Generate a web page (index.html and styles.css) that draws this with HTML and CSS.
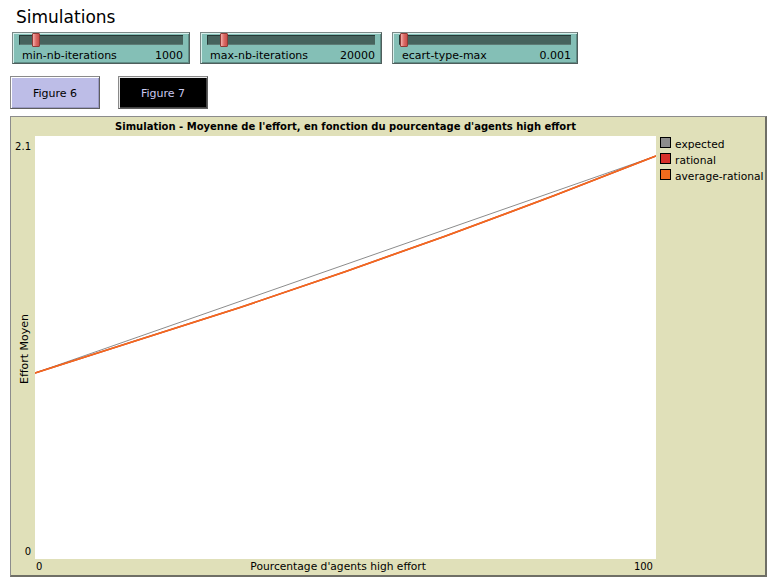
FILE: index.html
```html
<!DOCTYPE html>
<html>
<head>
<meta charset="utf-8">
<title>Simulations</title>
<link rel="stylesheet" href="styles.css">
</head>
<body>
<h1 class="title">Simulations</h1>
<div class="sliders">
  <div class="slider s1">
    <div class="track"><div class="thumb" style="left:12px"></div></div>
    <div class="slider-row"><span>min-nb-iterations</span><span>1000</span></div>
  </div>
  <div class="slider s2">
    <div class="track"><div class="thumb" style="left:12px"></div></div>
    <div class="slider-row"><span>max-nb-iterations</span><span>20000</span></div>
  </div>
  <div class="slider s3">
    <div class="track"><div class="thumb" style="left:0px"></div></div>
    <div class="slider-row"><span>ecart-type-max</span><span>0.001</span></div>
  </div>
</div>
<div class="buttons">
  <div class="btn btn-light">Figure 6</div>
  <div class="btn btn-dark">Figure 7</div>
</div>
<div class="plot">
  <div class="plot-title">Simulation - Moyenne de l'effort, en fonction du pourcentage d'agents high effort</div>
  <div class="yaxis">
    <span class="ytick">2.1</span>
    <span class="ylabel">Effort Moyen</span>
    <span class="ytick">0</span>
  </div>
  <div class="area">
    <svg class="chart" width="621" height="423" viewBox="0 0 621 423">
      <line x1="0" y1="237" x2="621" y2="20" stroke="#8c8c8c" stroke-width="1"/>
      <polyline points="0,237 100,205 205,171.5 310,135.7 410,100.2 520,59.3 621,20" fill="none" stroke="#d73027" stroke-width="1.6"/>
      <polyline points="0,237 100,205 205,171.5 310,135.7 410,100.2 520,59.3 621,20" fill="none" stroke="#f26b1d" stroke-width="1.6"/>
    </svg>
  </div>
  <div class="legend">
    <div class="leg-item"><span class="sw sw-gray"></span>expected</div>
    <div class="leg-item"><span class="sw sw-red"></span>rational</div>
    <div class="leg-item"><span class="sw sw-orange"></span>average-rational</div>
  </div>
  <div class="xaxis">
    <span class="xtick">0</span>
    <span class="xlabel">Pourcentage d'agents high effort</span>
    <span class="xtick">100</span>
  </div>
</div>
</body>
</html>
```
FILE: styles.css
```css
html, body {
  margin: 0;
  padding: 0;
  background: #ffffff;
  font-family: "DejaVu Sans", sans-serif;
  color: #000;
}

.title {
  margin: 0;
  padding: 8px 0 0 16px;
  height: 26px;
  box-sizing: border-box;
  font-size: 17px;
  font-weight: normal;
  line-height: 18px;
}

.sliders {
  display: flex;
  gap: 10px;
  margin: 6px 0 0 12px;
}

.slider {
  box-sizing: border-box;
  height: 32px;
  background: #84bfb6;
  border: 1px solid #7c8a88;
  border-right-color: #4f5e5c;
  border-bottom-color: #4f5e5c;
  box-shadow: inset 1px 1px 0 #d6efeb, inset -1px -1px 0 #5f8d86;
}
.s1 { width: 178px; }
.s2 { width: 182px; }
.s3 { width: 186px; }

.track {
  position: relative;
  height: 10px;
  margin: 2px 6px 0 6px;
  box-sizing: border-box;
  background: #46635d;
  border-top: 1px solid #263936;
  border-left: 1px solid #263936;
  border-bottom: 1px solid #5d7b75;
}

.thumb {
  position: absolute;
  top: -3px;
  width: 8px;
  height: 14px;
  box-sizing: border-box;
  background: linear-gradient(to right, #f3b0ad, #dc6a66 50%, #c9504c);
  border: 1px solid #8e3b38;
  border-radius: 1px;
}

.slider-row {
  display: flex;
  justify-content: space-between;
  margin-top: 4px;
  padding: 0 6px 0 9px;
  font-size: 11px;
  line-height: 13px;
}

.buttons {
  display: flex;
  gap: 18px;
  margin: 12px 0 0 10px;
}

.btn {
  box-sizing: border-box;
  width: 90px;
  height: 33px;
  display: flex;
  align-items: center;
  justify-content: center;
  padding-top: 2px;
  font-size: 11px;
  border: 1px solid #8a8a8a;
  border-right-color: #5e5e5e;
  border-bottom-color: #5e5e5e;
}
.btn-light {
  background: #bdbde7;
  box-shadow: inset 1px 1px 0 #ffffff, inset -1px -1px 0 #9a9ac4;
}
.btn-dark {
  background: #000000;
  color: #c9c9ee;
  box-shadow: inset 1px 1px 0 #e8e8e8, inset -1px -1px 0 #444;
}

.plot {
  margin: 7px 0 0 10px;
  width: 757px;
  box-sizing: border-box;
  background: #e0e0b9;
  border-top: 1px solid #8c8c8c;
  border-left: 1px solid #8c8c8c;
  border-right: 2px solid #6f6f66;
  border-bottom: 2px solid #6f6f66;
  display: grid;
  grid-template-columns: 24px 621px 109px;
  grid-template-rows: 19px 423px 16px;
}

.plot-title {
  grid-column: 2;
  grid-row: 1;
  text-align: center;
  font-weight: bold;
  font-size: 10px;
  line-height: 19px;
  white-space: nowrap;
}

.yaxis {
  grid-column: 1;
  grid-row: 2;
  display: flex;
  flex-direction: column;
  justify-content: space-between;
  align-items: flex-end;
  padding: 5px 4px 1px 0;
}
.ytick {
  font-size: 10px;
  line-height: 12px;
}
.ylabel {
  align-self: center;
  margin-left: 6px;
  writing-mode: vertical-rl;
  transform: rotate(180deg);
  font-size: 11px;
  line-height: 13px;
  white-space: nowrap;
}

.area {
  grid-column: 2;
  grid-row: 2;
  background: #ffffff;
}
.chart {
  display: block;
}

.legend {
  grid-column: 3;
  grid-row: 2;
  padding: 0 0 0 4px;
  font-size: 10.7px;
}
.leg-item {
  display: flex;
  align-items: center;
  gap: 4px;
  height: 16px;
  line-height: 11px;
  white-space: nowrap;
}
.sw {
  box-sizing: border-box;
  width: 11px;
  height: 11px;
  border: 1px solid #000;
  align-self: flex-start;
  margin-top: 1px;
}
.sw-gray { background: #8d8d8d; }
.sw-red { background: #d7302a; }
.sw-orange { background: #f26b1d; }

.xaxis {
  grid-column: 2;
  grid-row: 3;
  display: flex;
  justify-content: space-between;
  padding: 0 3px 0 1px;
  font-size: 10px;
  line-height: 16px;
}
.xlabel {
  font-size: 10.7px;
}
```
